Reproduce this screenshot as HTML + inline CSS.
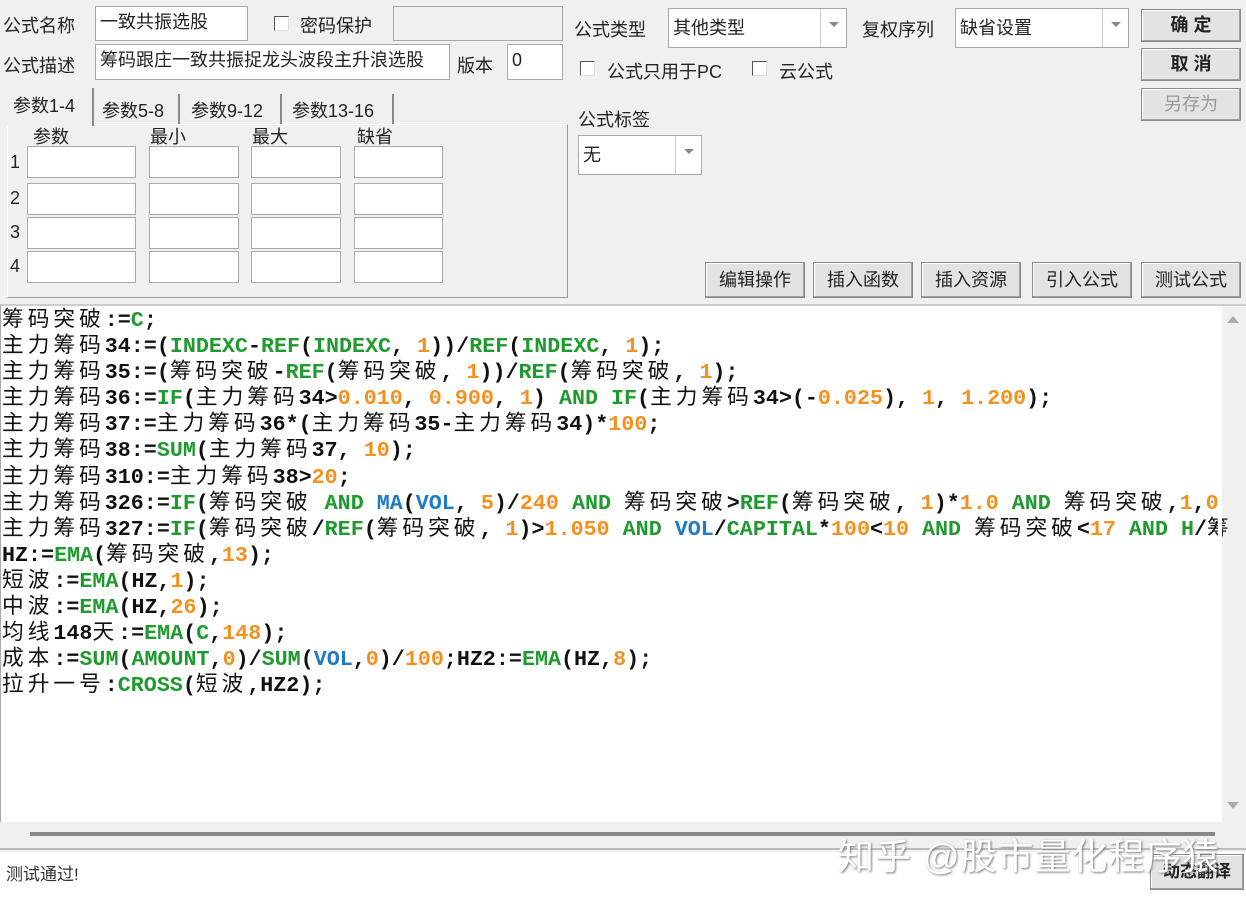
<!DOCTYPE html>
<html><head><meta charset="utf-8"><style>
*{margin:0;padding:0;box-sizing:border-box}
body{width:1246px;height:899px;background:#f0f0f0;position:relative;overflow:hidden;font-family:"Liberation Sans","Noto Sans CJK SC",sans-serif;font-size:18px;color:#222}
.a{position:absolute}
.inp{position:absolute;background:#fff;border:1px solid #a8a8a8;font-size:18px;line-height:30px;padding-left:4px;white-space:nowrap;overflow:hidden}
.dis{background:#f0f0f0}
.cb{position:absolute;width:15px;height:15px;border:1px solid #555;border-right-color:#ddd;border-bottom-color:#ddd;background:#fff}
.btn{position:absolute;background:#e3e3e3;border:1px solid #8a8a8a;box-shadow:inset -1px -1px 0 #a0a0a0,inset 1px 1px 0 #fff;text-align:center;font-size:18px;line-height:30px}
.dd{position:absolute;width:26px;top:0;bottom:0;right:0;border-left:1px solid #ccc}
.dd:after{content:"";position:absolute;left:8px;top:13px;border:5px solid transparent;border-top:5px solid #888}
.pi{position:absolute;background:#fff;border:1px solid #a8a8a8;height:32px}
#code{position:absolute;left:2px;top:305px;font-family:"Liberation Mono","Noto Sans CJK SC",monospace;font-size:21.7px;font-weight:bold;white-space:pre;color:#111}
#code div{height:26.1px;line-height:26px;overflow:visible}
#code i{font-style:normal;font-weight:normal;letter-spacing:4px;font-family:"Noto Sans CJK SC",sans-serif;line-height:26px}
.g{color:#1f9a2f}.o{color:#f5901e}.b{color:#1c7bc4}
</style></head><body>
<div class="a" style="left:3px;top:12px">公式名称</div>
<div class="inp" style="left:95px;top:6px;width:153px;height:35px">一致共振选股</div>
<div class="cb" style="left:274px;top:16px"></div>
<div class="a" style="left:300px;top:12px">密码保护</div>
<div class="inp dis" style="left:393px;top:6px;width:170px;height:35px"></div>
<div class="a" style="left:3px;top:52px">公式描述</div>
<div class="inp" style="left:95px;top:44px;width:355px;height:36px">筹码跟庄一致共振捉龙头波段主升浪选股</div>
<div class="a" style="left:457px;top:52px">版本</div>
<div class="inp" style="left:507px;top:44px;width:56px;height:36px">0</div>

<div class="a" style="left:7px;top:124px;width:561px;height:174px;border:1px solid #999;border-top-color:#fff;border-left-color:#fff;background:#f0f0f0"></div>
<div class="a" style="left:4px;top:88px;width:90px;height:38px;background:#f0f0f0;border-right:2px solid #888;padding:4px 0 0 9px">参数1-4</div>
<div class="a" style="left:96px;top:94px;width:84px;height:30px;border-right:2px solid #888;padding:3px 0 0 6px">参数5-8</div>
<div class="a" style="left:182px;top:94px;width:100px;height:30px;border-right:2px solid #888;padding:3px 0 0 9px">参数9-12</div>
<div class="a" style="left:284px;top:94px;width:110px;height:30px;border-right:2px solid #888;padding:3px 0 0 8px">参数13-16</div>
<div class="a" style="left:33px;top:123px">参数</div>
<div class="a" style="left:150px;top:123px">最小</div>
<div class="a" style="left:252px;top:123px">最大</div>
<div class="a" style="left:357px;top:123px">缺省</div>
<div class="a" style="left:10px;top:152px">1</div><div class="a" style="left:10px;top:188px">2</div><div class="a" style="left:10px;top:222px">3</div><div class="a" style="left:10px;top:256px">4</div>
<div class="pi" style="left:27px;top:146px;width:109px"></div><div class="pi" style="left:149px;top:146px;width:90px"></div><div class="pi" style="left:251px;top:146px;width:90px"></div><div class="pi" style="left:354px;top:146px;width:89px"></div>
<div class="pi" style="left:27px;top:183px;width:109px"></div><div class="pi" style="left:149px;top:183px;width:90px"></div><div class="pi" style="left:251px;top:183px;width:90px"></div><div class="pi" style="left:354px;top:183px;width:89px"></div>
<div class="pi" style="left:27px;top:217px;width:109px"></div><div class="pi" style="left:149px;top:217px;width:90px"></div><div class="pi" style="left:251px;top:217px;width:90px"></div><div class="pi" style="left:354px;top:217px;width:89px"></div>
<div class="pi" style="left:27px;top:251px;width:109px"></div><div class="pi" style="left:149px;top:251px;width:90px"></div><div class="pi" style="left:251px;top:251px;width:90px"></div><div class="pi" style="left:354px;top:251px;width:89px"></div>

<div class="a" style="left:574px;top:16px">公式类型</div>
<div class="inp" style="left:668px;top:8px;width:179px;height:40px;line-height:38px">其他类型<div class="dd"></div></div>
<div class="a" style="left:862px;top:16px">复权序列</div>
<div class="inp" style="left:955px;top:8px;width:174px;height:40px;line-height:38px">缺省设置<div class="dd"></div></div>
<div class="cb" style="left:580px;top:61px"></div><div class="a" style="left:607px;top:58px">公式只用于PC</div>
<div class="cb" style="left:752px;top:61px"></div><div class="a" style="left:779px;top:58px">云公式</div>
<div class="a" style="left:578px;top:106px">公式标签</div>
<div class="inp" style="left:578px;top:135px;width:124px;height:40px;line-height:38px">无<div class="dd"></div></div>
<div class="btn" style="left:1141px;top:9px;width:100px;height:33px;font-weight:bold">确 定</div>
<div class="btn" style="left:1141px;top:48px;width:100px;height:33px;font-weight:bold">取 消</div>
<div class="btn" style="left:1141px;top:88px;width:100px;height:33px;color:#999">另存为</div>
<div class="btn" style="left:705px;top:262px;width:100px;height:36px;line-height:34px">编辑操作</div>
<div class="btn" style="left:813px;top:262px;width:100px;height:36px;line-height:34px">插入函数</div>
<div class="btn" style="left:921px;top:262px;width:100px;height:36px;line-height:34px">插入资源</div>
<div class="btn" style="left:1032px;top:262px;width:100px;height:36px;line-height:34px">引入公式</div>
<div class="btn" style="left:1141px;top:262px;width:100px;height:36px;line-height:34px">测试公式</div>

<div class="a" style="left:0;top:304px;width:1246px;height:518px;background:#fff;border-top:2px solid #ccc;border-left:1px solid #aaa"></div>
<div class="a" style="left:1222px;top:306px;width:24px;height:516px;background:#f0f0f0"></div>
<div class="a" style="left:1227px;top:316px;border:6px solid transparent;border-bottom:7px solid #aaa;border-top:0"></div>
<div class="a" style="left:1227px;top:802px;border:6px solid transparent;border-top:7px solid #aaa;border-bottom:0"></div>
<div class="a" style="left:0;top:822px;width:1246px;height:28px;background:#f0f0f0;border-bottom:2px solid #bbb"></div>
<div class="a" style="left:30px;top:832px;width:1185px;height:4px;background:#888"></div>
<div class="a" style="left:0;top:852px;width:1246px;height:47px;background:#fff"></div>
<div class="a" style="left:6px;top:860px;font-size:17px;color:#333">测试通过!</div>
<div class="btn" style="left:1150px;top:854px;width:94px;height:36px;line-height:34px;font-size:17px;font-weight:bold">动态翻译</div>
<div class="a" style="left:838px;top:828px;font-size:36px;color:#fff;text-shadow:1px 1px 2px #777;letter-spacing:1px">知乎 @股市量化程序猿</div>

<div id="code"><div><i>筹码突破</i>:=<span class="g">C</span>;</div><div><i>主力筹码</i>34:=(<span class="g">INDEXC</span>-<span class="g">REF</span>(<span class="g">INDEXC</span>, <span class="o">1</span>))/<span class="g">REF</span>(<span class="g">INDEXC</span>, <span class="o">1</span>);</div><div><i>主力筹码</i>35:=(<i>筹码突破</i>-<span class="g">REF</span>(<i>筹码突破</i>, <span class="o">1</span>))/<span class="g">REF</span>(<i>筹码突破</i>, <span class="o">1</span>);</div><div><i>主力筹码</i>36:=<span class="g">IF</span>(<i>主力筹码</i>34&gt;<span class="o">0.010</span>, <span class="o">0.900</span>, <span class="o">1</span>) <span class="g">AND</span> <span class="g">IF</span>(<i>主力筹码</i>34&gt;(-<span class="o">0.025</span>), <span class="o">1</span>, <span class="o">1.200</span>);</div><div><i>主力筹码</i>37:=<i>主力筹码</i>36*(<i>主力筹码</i>35-<i>主力筹码</i>34)*<span class="o">100</span>;</div><div><i>主力筹码</i>38:=<span class="g">SUM</span>(<i>主力筹码</i>37, <span class="o">10</span>);</div><div><i>主力筹码</i>310:=<i>主力筹码</i>38&gt;<span class="o">20</span>;</div><div><i>主力筹码</i>326:=<span class="g">IF</span>(<i>筹码突破</i> <span class="g">AND</span> <span class="b">MA</span>(<span class="b">VOL</span>, <span class="o">5</span>)/<span class="o">240</span> <span class="g">AND</span> <i>筹码突破</i>&gt;<span class="g">REF</span>(<i>筹码突破</i>, <span class="o">1</span>)*<span class="o">1.0</span> <span class="g">AND</span> <i>筹码突破</i>,<span class="o">1</span>,<span class="o">0</span></div><div><i>主力筹码</i>327:=<span class="g">IF</span>(<i>筹码突破</i>/<span class="g">REF</span>(<i>筹码突破</i>, <span class="o">1</span>)&gt;<span class="o">1.050</span> <span class="g">AND</span> <span class="b">VOL</span>/<span class="g">CAPITAL</span>*<span class="o">100</span>&lt;<span class="o">10</span> <span class="g">AND</span> <i>筹码突破</i>&lt;<span class="o">17</span> <span class="g">AND</span> <span class="g">H</span>/<i>筹</i></div><div>HZ:=<span class="g">EMA</span>(<i>筹码突破</i>,<span class="o">13</span>);</div><div><i>短波</i>:=<span class="g">EMA</span>(HZ,<span class="o">1</span>);</div><div><i>中波</i>:=<span class="g">EMA</span>(HZ,<span class="o">26</span>);</div><div><i>均线</i>148<i>天</i>:=<span class="g">EMA</span>(<span class="g">C</span>,<span class="o">148</span>);</div><div><i>成本</i>:=<span class="g">SUM</span>(<span class="g">AMOUNT</span>,<span class="o">0</span>)/<span class="g">SUM</span>(<span class="b">VOL</span>,<span class="o">0</span>)/<span class="o">100</span>;HZ2:=<span class="g">EMA</span>(HZ,<span class="o">8</span>);</div><div><i>拉升一号</i>:<span class="g">CROSS</span>(<i>短波</i>,HZ2);</div></div>
<div class="a" style="left:1218px;top:306px;width:4px;height:516px;background:#fff"></div>
</body></html>
